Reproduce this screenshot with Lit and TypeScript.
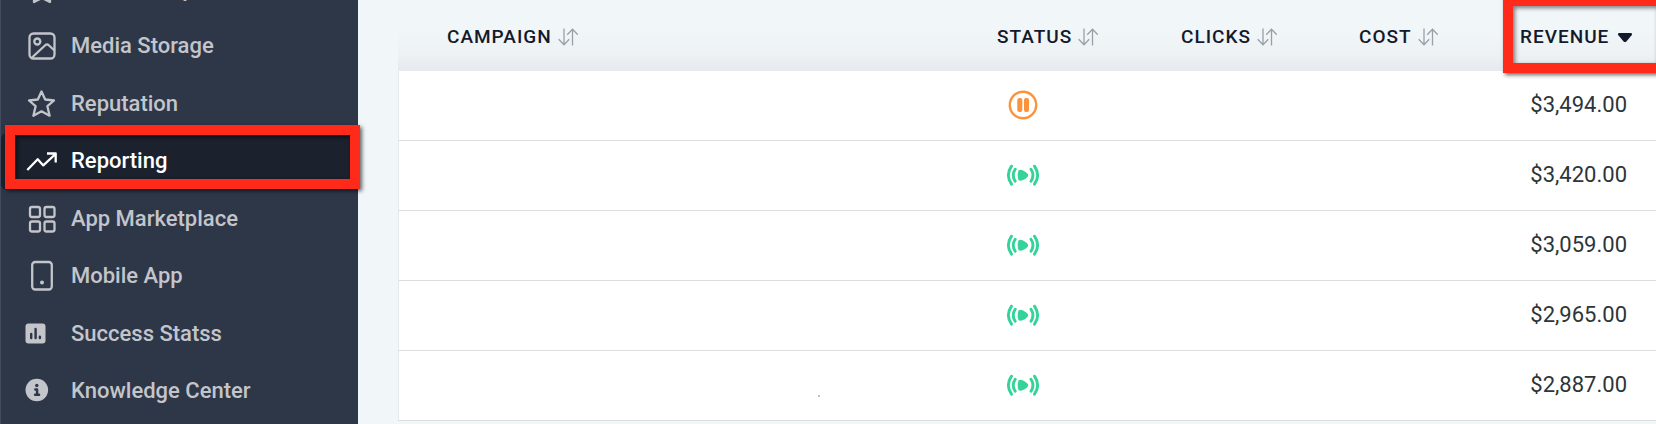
import { LitElement, html, css, svg, nothing, TemplateResult } from "lit";
import { customElement, property } from "lit/decorators.js";

interface NavEntry {
  label: string;
  icon: TemplateResult;
  active?: boolean;
}

interface Campaign {
  status: "paused" | "live";
  revenue: string;
}

const badge = svg`<path d="M17 3l4 3 5 0 1 5 3 4-3 4-2 1v10l-8-4-8 4V20l-2-1-3-4 3-4 1-5 5 0z"/>`;
const image = svg`
  <rect x="4.500" y="4.500" width="25" height="25" rx="4"/>
  <circle cx="12.300" cy="12.500" r="3"/>
  <path d="M7 28.500L20.500 16a2.500 2.500 0 0 1 3 0L29.500 21.500"/>`;
const star = svg`<path d="M16.500 4.500l3.700 8 8.800 1-6.600 5.700 2.200 9.500-8.100-4.400-8.100 4.400 2.200-9.500L4 13.500l8.800-1z"/>`;
const trend = svg`<path d="M2.300 26L12.700 15.200l5.600 6.200L30.500 10M22 9.500h8.700v9"/>`;
const grid = svg`
  <rect x="5" y="5" width="10" height="10" rx="2"/>
  <rect x="19.500" y="5" width="10" height="10" rx="2"/>
  <rect x="5" y="19.500" width="10" height="10" rx="2"/>
  <rect x="19.500" y="19.500" width="10" height="10" rx="2"/>`;
const phone = svg`
  <rect x="7.200" y="3" width="19.600" height="27.500" rx="3"/>
  <circle class="solid" cx="17" cy="23.500" r="2"/>`;
const stats = svg`
  <rect class="solid" x="0.500" y="6.500" width="20" height="20" rx="3"/>
  <path class="cut" d="M6.200 17v4M10.600 12v9M14.900 19.800v1.200"/>`;
const info = svg`
  <circle class="solid" cx="11.800" cy="16" r="11.300"/>
  <circle class="cut-fill" cx="11.800" cy="11.500" r="1.700"/>
  <path class="cut" d="M10.300 15.500h1.800v5M10.100 20.700h4"/>`;

const navEntries: NavEntry[] = [
  { label: "Memberships", icon: badge },
  { label: "Media Storage", icon: image },
  { label: "Reputation", icon: star },
  { label: "Reporting", icon: trend, active: true },
  { label: "App Marketplace", icon: grid },
  { label: "Mobile App", icon: phone },
  { label: "Success Statss", icon: stats },
  { label: "Knowledge Center", icon: info },
];

const campaigns: Campaign[] = [
  { status: "paused", revenue: "$3,494.00" },
  { status: "live", revenue: "$3,420.00" },
  { status: "live", revenue: "$3,059.00" },
  { status: "live", revenue: "$2,965.00" },
  { status: "live", revenue: "$2,887.00" },
];

@customElement("side-nav")
class SideNav extends LitElement {
  static styles = css`
    :host {
      display: flex;
      flex-direction: column;
      box-sizing: border-box;
      background: #2e3748;
      border-left: 1px solid #414b5c;
      font-family: Roboto, "Liberation Sans", sans-serif;
    }
    .list {
      flex: 1;
      display: grid;
      grid-auto-rows: 1fr;
      margin: -40px 0 4px;
    }
    .item {
      position: relative;
      display: flex;
      align-items: center;
      gap: 12px;
      min-height: 56px;
      box-sizing: border-box;
      padding-left: 24px;
      border-radius: 6px;
      color: #c3c5cb;
      font-size: 22px;
      font-weight: 500;
      line-height: 26px;
      text-decoration: none;
    }
    .active {
      background: #1b212d;
      color: #fff;
    }
    .active::after {
      content: "";
      position: absolute;
      inset: -8px -2px 1px 4px;
      border: 10px solid #ff2a1a;
      box-shadow: 2px 2px 4px rgba(0, 0, 0, 0.6), inset 2px 2px 4px rgba(0, 0, 0, 0.6);
      pointer-events: none;
    }
    .icon {
      flex: none;
      width: 34px;
      height: 34px;
      fill: none;
      stroke: currentColor;
      stroke-width: 2.3;
      stroke-linejoin: round;
    }
    .solid {
      fill: currentColor;
      stroke: none;
    }
    .cut {
      stroke: #2e3748;
      stroke-width: 2.4;
      stroke-linecap: round;
    }
    .cut-fill {
      fill: #2e3748;
      stroke: none;
    }
  `;

  render() {
    return html`<nav class="list" aria-label="Main">
      ${navEntries.map(
        (e) => html`<a
          class="item ${e.active ? "active" : ""}"
          href="#"
          aria-current=${e.active ? "page" : nothing}
          ><svg class="icon" viewBox="0 0 34 34" aria-hidden="true">${e.icon}</svg>${e.label}</a
        >`
      )}
    </nav>`;
  }
}

@customElement("status-icon")
class StatusIcon extends LitElement {
  @property() status: Campaign["status"] = "live";

  static styles = css`
    :host {
      display: block;
      width: 34px;
      height: 34px;
    }
    .icon {
      display: block;
      width: 34px;
      height: 34px;
      fill: none;
      stroke-width: 2.4;
      stroke-linecap: round;
    }
    .paused {
      stroke: #fb923c;
    }
    .live {
      stroke: #34d399;
      stroke-width: 2.9;
    }
    .bar {
      fill: #fb923c;
      stroke: none;
    }
    .play {
      fill: #34d399;
      stroke: none;
    }
  `;

  render() {
    return this.status === "paused"
      ? html`<svg class="icon paused" viewBox="0 0 34 34" role="img" aria-label="Paused">
          <circle cx="17" cy="17" r="13.2" />
          <rect class="bar" x="11.300" y="10" width="5" height="14" rx="2" />
          <rect class="bar" x="18" y="10" width="5" height="14" rx="2" />
        </svg>`
      : html`<svg class="icon live" viewBox="0 0 34 34" role="img" aria-label="Live">
          <path d="M5.500 8.200Q-.8 17.300 5.500 26.200M9.200 11.300Q5.300 17.300 9.200 23.200" />
          <path d="M28.500 8.200Q34.800 17.300 28.500 26.200M25 11.300Q28.900 17.300 25 23.200" />
          <path
            class="play"
            d="M12.600 12.300q2-1 4.500.2 3.300 1.500 4.700 3.500.9 1.300 0 2.600-1.400 2-4.700 3.500-2.500 1.200-4.500.2-.9-2.200-.9-5t.9-5z"
          />
        </svg>`;
  }
}

@customElement("campaign-table")
class CampaignTable extends LitElement {
  static styles = css`
    :host {
      display: block;
      font-family: Roboto, "Liberation Sans", sans-serif;
    }
    .table {
      width: 100%;
      table-layout: fixed;
      border-collapse: separate;
      border-spacing: 0;
    }
    .head {
      position: relative;
      height: 71px;
      padding: 2px 0 0;
      box-sizing: border-box;
      text-align: left;
      background: linear-gradient(#f1f6f9 40%, #eef2f5 75%, #e6e9ed);
    }
    .campaign {
      padding-left: 49px;
    }
    .status {
      width: 184px;
    }
    .clicks {
      width: 178px;
    }
    .cost {
      width: 161px;
    }
    .revenue {
      width: 136px;
    }
    .revenue::after {
      content: "";
      position: absolute;
      inset: -4px -10px -2px -17px;
      border: 10px solid #ff2a1a;
      box-shadow: 2px 2px 4px rgba(0, 0, 0, 0.6), inset 2px 2px 4px rgba(0, 0, 0, 0.5);
      pointer-events: none;
    }
    .sort {
      display: inline-flex;
      align-items: center;
      gap: 6px;
      padding: 0;
      border: 0;
      background: none;
      color: #131a2c;
      font: 500 19px/24px Roboto, "Liberation Sans", sans-serif;
      letter-spacing: 1px;
    }
    .arrows {
      width: 20px;
      height: 20px;
      fill: none;
      stroke: #9a9fa8;
      stroke-width: 1.3;
    }
    .caret {
      width: 18px;
      height: 20px;
      fill: #131a2c;
    }
    .cell {
      height: 70px;
      box-sizing: border-box;
      padding: 0 0 1px;
      background: #fff;
      border-bottom: 1px solid #dbdddf;
      color: #2d3538;
      font-size: 22px;
      line-height: 26px;
    }
    .first {
      position: relative;
      border-left: 1px solid #e6eaed;
    }
    .state {
      padding-left: 9px;
    }
    .amount {
      padding-right: 29px;
      text-align: right;
    }
    .speck {
      position: absolute;
      left: 70%;
      bottom: 23px;
      width: 2px;
      height: 2px;
      background: #b8bde0;
    }
  `;

  private sortable(label: string) {
    return html`<button class="sort" type="button">
      ${label}<svg class="arrows" viewBox="0 0 20 20" aria-hidden="true">
        <path d="M6 1.500v16M.7 12.300L6 17.700l5.300-5.400M14.500 18.500v-16M9.200 7.700l5.300-5.400 5.300 5.400" />
      </svg>
    </button>`;
  }

  render() {
    return html`<table class="table">
      <thead>
        <tr>
          <th class="head campaign" scope="col">${this.sortable("CAMPAIGN")}</th>
          <th class="head status" scope="col">${this.sortable("STATUS")}</th>
          <th class="head clicks" scope="col">${this.sortable("CLICKS")}</th>
          <th class="head cost" scope="col">${this.sortable("COST")}</th>
          <th class="head revenue" scope="col" aria-sort="descending">
            <button class="sort" type="button">
              REVENUE<svg class="caret" viewBox="-2 0 18 20" aria-hidden="true">
                <path d="M2.300 6h11.400q2.200.4.900 2.200l-5.200 6.200q-1.400 1.200-2.800 0L1.400 8.200Q.1 6.400 2.300 6z" />
              </svg>
            </button>
          </th>
        </tr>
      </thead>
      <tbody>
        ${campaigns.map(
          (c, i) => html`<tr>
            <td class="cell first">
              ${i === campaigns.length - 1 ? html`<span class="speck"></span>` : nothing}
            </td>
            <td class="cell state"><status-icon .status=${c.status}></status-icon></td>
            <td class="cell"></td>
            <td class="cell"></td>
            <td class="cell amount">${c.revenue}</td>
          </tr>`
        )}
      </tbody>
    </table>`;
  }
}

@customElement("app-root")
class AppRoot extends LitElement {
  static styles = css`
    :host {
      display: block;
    }
    .shell {
      display: grid;
      grid-template-columns: 358px minmax(0, 1fr);
      min-height: 100vh;
      overflow: hidden;
      background: #f1f6f9;
    }
    .nav {
      position: relative;
      z-index: 1;
    }
    .content {
      padding-left: 40px;
    }
  `;

  render() {
    return html`<div class="shell">
      <side-nav class="nav"></side-nav>
      <main class="content"><campaign-table></campaign-table></main>
    </div>`;
  }
}
